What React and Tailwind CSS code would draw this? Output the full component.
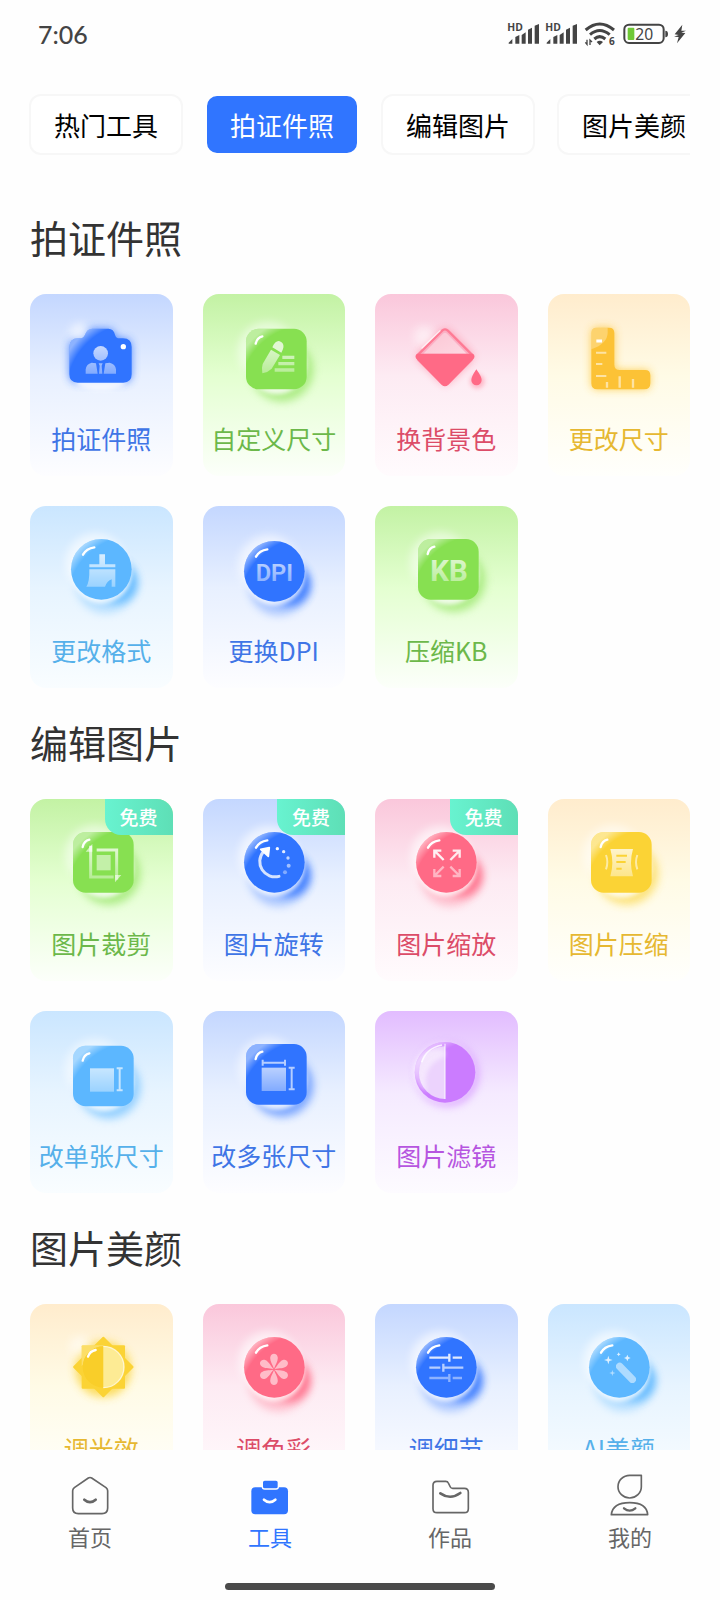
import React, { useState } from "react";
import clsx from "clsx";

const THEMES = {
  blue: { main: "#3074ff", card: "from-[#c4d7ff] via-[#e8f0ff] to-[#fdfdff]", text: "text-[#3f75e6]" },
  green: { main: "#87e051", card: "from-[#c3f2a4] via-[#e4ffd1] to-[#fcfffa]", text: "text-[#6cb84a]" },
  pink: { main: "#ff6a86", card: "from-[#fac7db] via-[#fdebf3] to-[#fffbfd]", text: "text-[#dc4c68]" },
  yellow: { main: "#fbd335", card: "from-[#ffeccd] via-[#fffbe6] to-[#fffffc]", text: "text-[#e6b831]" },
  sky: { main: "#5cb7ff", card: "from-[#cae6ff] via-[#e7f4ff] to-[#f9fdff]", text: "text-[#55b0ea]" },
  purple: { main: "#cb7cff", card: "from-[#e2bcff] via-[#f5eaff] to-[#fdfbff]", text: "text-[#b655e0]" },
};

const TABS = ["热门工具", "拍证件照", "编辑图片", "图片美颜"];

const SECTIONS = [
  {
    title: "拍证件照",
    tools: [
      { name: "拍证件照", theme: "blue", Icon: CameraIcon },
      { name: "自定义尺寸", theme: "green", Icon: EditIcon },
      { name: "换背景色", theme: "pink", Icon: BucketIcon },
      { name: "更改尺寸", theme: "yellow", Icon: RulerIcon },
      { name: "更改格式", theme: "sky", Icon: BrushIcon },
      { name: "更换DPI", theme: "blue", Icon: DpiIcon },
      { name: "压缩KB", theme: "green", Icon: KbIcon },
    ],
  },
  {
    title: "编辑图片",
    tools: [
      { name: "图片裁剪", theme: "green", Icon: CropIcon, free: true },
      { name: "图片旋转", theme: "blue", Icon: RotateIcon, free: true },
      { name: "图片缩放", theme: "pink", Icon: ExpandIcon, free: true },
      { name: "图片压缩", theme: "yellow", Icon: CompressIcon },
      { name: "改单张尺寸", theme: "sky", Icon: SingleSizeIcon },
      { name: "改多张尺寸", theme: "blue", Icon: MultiSizeIcon },
      { name: "图片滤镜", theme: "purple", Icon: FilterIcon },
    ],
  },
  {
    title: "图片美颜",
    tools: [
      { name: "调光效", theme: "yellow", Icon: SunIcon },
      { name: "调色彩", theme: "pink", Icon: FlowerIcon },
      { name: "调细节", theme: "blue", Icon: TuneIcon },
      { name: "AI美颜", theme: "sky", Icon: WandIcon },
    ],
  },
];

const NAV = [
  { name: "首页", href: "#home", Icon: HomeIcon },
  { name: "工具", href: "#tools", Icon: ToolboxIcon },
  { name: "作品", href: "#works", Icon: FolderIcon },
  { name: "我的", href: "#mine", Icon: ProfileIcon },
];

/* Gradients and blurs shared by every tool icon */
function IconDefs() {
  return (
    <svg className="absolute h-0 w-0" aria-hidden="true">
      <defs>
        <linearGradient id="fade" gradientUnits="userSpaceOnUse" x1="0" y1="100" x2="0" y2="215">
          <stop offset="0" stopColor="#fff" stopOpacity="0.8" />
          <stop offset="1" stopColor="#fff" stopOpacity="0.35" />
        </linearGradient>
        <radialGradient id="gloss" gradientUnits="userSpaceOnUse" cx="260" cy="260" r="236">
          <stop offset="0.88" stopColor="#fff" stopOpacity="0" />
          <stop offset="1" stopColor="#fff" stopOpacity="0.45" />
        </radialGradient>
        <linearGradient id="glass" x1="0" y1="0" x2="1" y2="1">
          <stop offset="0" stopColor="#fff" stopOpacity="0.45" />
          <stop offset="1" stopColor="#fff" stopOpacity="0.85" />
        </linearGradient>
        <filter id="blurS" x="-30%" y="-30%" width="160%" height="160%">
          <feGaussianBlur stdDeviation="6" />
        </filter>
        <filter id="blurL" x="-40%" y="-40%" width="180%" height="180%">
          <feGaussianBlur stdDeviation="13" />
        </filter>
      </defs>
    </svg>
  );
}

function IconCanvas({ children }) {
  return (
    <svg viewBox="0 0 312 312" className="h-[104px] w-[104px] overflow-visible" aria-hidden="true">
      {children}
    </svg>
  );
}

function Sphere({ color, y = 0, children }) {
  return (
    <IconCanvas>
      <g transform={`translate(0 ${y})`}>
        <circle cx="140" cy="136" r="90" fill="#fff" opacity="0.6" filter="url(#blurL)" />
        <circle cx="170" cy="196" r="90" fill={color} opacity="0.35" filter="url(#blurL)" />
        <circle cx="204" cy="194" r="62" fill={color} opacity="0.85" filter="url(#blurL)" />
        <circle cx="158" cy="166" r="90" fill="#fff" opacity="0.8" filter="url(#blurS)" />
        <circle cx="157" cy="154" r="91" fill={color} />
        <circle cx="157" cy="154" r="91" fill="url(#gloss)" />
        <path d="M102 110Q112 91 136 88" fill="none" stroke="#fff" strokeWidth="7" strokeLinecap="round" />
      </g>
      {children}
    </IconCanvas>
  );
}

function Tile({ color, y = 0, children }) {
  return (
    <IconCanvas>
      <g transform={`translate(0 ${y})`}>
        <circle cx="138" cy="132" r="90" fill="#fff" opacity="0.5" filter="url(#blurL)" />
        <circle cx="180" cy="188" r="94" fill={color} opacity="0.6" filter="url(#blurL)" />
        <circle cx="164" cy="170" r="90" fill="#fff" opacity="0.8" filter="url(#blurS)" />
        <rect x="72" y="63" width="182" height="182" rx="38" fill={color} />
        <rect x="72" y="63" width="182" height="182" rx="38" fill="url(#gloss)" />
        <path d="M101 108Q105 90 121 86" fill="none" stroke="#fff" strokeWidth="7" strokeLinecap="round" />
      </g>
      {children}
    </IconCanvas>
  );
}

function CameraIcon({ color }) {
  const body =
    "M88 97H92Q104 97 108 86Q114 68 130 68H178Q194 68 198 86Q200 97 212 97H222Q248 97 248 123V205Q248 230 223 230H86Q61 230 61 205V124Q61 97 88 97Z";
  return (
    <IconCanvas>
      <path d={body} fill={color} opacity="0.8" filter="url(#blurL)" />
      <ellipse cx="155" cy="228" rx="76" ry="24" fill="#fff" opacity="0.8" filter="url(#blurS)" />
      <circle cx="92" cy="82" r="30" fill="#fff" opacity="0.6" filter="url(#blurL)" />
      <path d={body} fill={color} />
      <path d={body} fill="url(#gloss)" />
      <circle cx="155" cy="142" r="22" fill="url(#fade)" />
      <path d="M128 170L141 172L146 203H110V190Q112 174 128 170ZM182 170L169 172L164 203H201V190Q199 174 182 170ZM149 172H161L158 179L160 203H150L152 179Z" fill="url(#fade)" />
      <circle cx="223" cy="122" r="8" fill="#fff" />
    </IconCanvas>
  );
}

function EditIcon({ color }) {
  return (
    <Tile color={color} y={5}>
      <path d="M121 202Q118 186 122 174L147 131L174 147L149 188Q138 199 121 202Z" fill="url(#fade)" />
      <path d="M151 124C158 108 167 102 176 107C187 113 187 124 178 140Z" fill="#fff" opacity="0.75" />
      <path d="M181 154H217M169 173H217M158 192H217" stroke="url(#fade)" strokeWidth="10" />
    </Tile>
  );
}

function BucketIcon({ color }) {
  return (
    <IconCanvas>
      <rect x="92" y="90" width="124" height="124" rx="14" transform="rotate(45 154 152)" fill={color} opacity="0.65" filter="url(#blurL)" />
      <circle cx="90" cy="90" r="30" fill="#fff" opacity="0.5" filter="url(#blurL)" />
      <rect x="88" y="88" width="130" height="130" rx="14" transform="rotate(45 153 153)" fill="#fbb0c4" />
      <rect x="91" y="91" width="124" height="124" rx="12" transform="rotate(45 153 153)" fill="none" stroke={color} strokeWidth="7" opacity="0.75" />
      <path d="M147 83Q153 77 159 83L218 143H88Z" fill="url(#glass)" opacity="0.6" />
      <path d="M84 126L138 74" fill="none" stroke="#fff" strokeWidth="4" strokeLinecap="round" opacity="0.7" />
      <path d="M69 143H237Q246 151 237 160L163 236Q153 246 143 236L69 160Q60 151 69 143Z" fill={color} />
      <ellipse cx="250" cy="226" rx="22" ry="22" fill={color} opacity="0.4" filter="url(#blurS)" />
      <path d="M247 190Q263 212 263 222A15 15 0 0 1 232 222Q232 212 247 190Z" fill={color} />
    </IconCanvas>
  );
}

function RulerIcon() {
  const body =
    "M89 65H126Q142 65 142 81V176Q142 192 158 192H234Q250 192 250 208V232Q250 250 232 250H91Q73 250 73 232V81Q73 65 89 65Z";
  return (
    <IconCanvas>
      <path d={body} fill="#fcc436" opacity="0.8" filter="url(#blurL)" />
      <path d={body} fill="#fcc236" />
      <path d="M89 65H122V80Q122 112 73 130V81Q73 65 89 65Z" fill="#fff" opacity="0.28" />
      <path d="M88 105H105" stroke="#fff" strokeWidth="9" />
      <path d="M87 140H118M87 174H106M87 210H118" stroke="#fff" strokeWidth="6" opacity="0.55" />
      <path d="M120 228V245M158 211V245M198 219V245" stroke="#fff" strokeWidth="7" opacity="0.55" />
    </IconCanvas>
  );
}

function BrushIcon({ color }) {
  return (
    <Sphere color={color}>
      <path d="M151 109H168V139H199V148H121V139H151Z" fill="url(#fade)" />
      <path d="M121 154H199V206H188V184Q175 188 168 206H112Q122 192 121 154Z" fill="url(#fade)" />
    </Sphere>
  );
}

function DpiIcon({ color }) {
  return (
    <Sphere color={color} y={6}>
      <text x="157" y="188" textAnchor="middle" fontSize="71" fontWeight="600" fill="url(#fade)" className="font-['Roboto',sans-serif]">DPI</text>
    </Sphere>
  );
}

function KbIcon({ color }) {
  return (
    <Tile color={color}>
      <text x="165" y="188" textAnchor="middle" fontSize="88" fontWeight="700" fill="url(#fade)" className="font-['Roboto',sans-serif]">KB</text>
    </Tile>
  );
}

function CropIcon({ color }) {
  return (
    <Tile color={color}>
      <path d="M125 104V198H194M143 117H203V206" fill="none" stroke="url(#fade)" strokeWidth="9" />
      <path d="M130 98V122H110ZM198 214V192H217Z" fill="#fff" opacity="0.6" />
      <rect x="143" y="132" width="42" height="46" fill="#fff" opacity="0.5" />
    </Tile>
  );
}

function RotateIcon({ color }) {
  return (
    <Sphere color={color}>
      <path d="M124 122A46 46 0 0 0 171 196" fill="none" stroke="#fff" strokeWidth="9" strokeLinecap="round" opacity="0.8" />
      <path d="M116 115L142 110L139 136Z" fill="#fff" stroke="#fff" strokeWidth="5" strokeLinejoin="round" />
      <g fill="#fff">
        <circle cx="166" cy="113" r="5" opacity="0.95" />
        <circle cx="185" cy="122" r="5" opacity="0.85" />
        <circle cx="198" cy="141" r="5" opacity="0.7" />
        <circle cx="200" cy="164" r="6" opacity="0.55" />
        <circle cx="189" cy="184" r="6" opacity="0.4" />
      </g>
    </Sphere>
  );
}

function ExpandIcon({ color }) {
  return (
    <Sphere color={color}>
      <g fill="none" stroke="#fff" strokeWidth="7">
        <path d="M121 140V119H142M121 119L149 147" opacity="0.9" />
        <path d="M197 140V119H176M197 119L169 147" opacity="0.85" />
        <path d="M121 174V195H142M121 195L149 167" opacity="0.5" />
        <path d="M197 174V195H176M197 195L169 167" opacity="0.5" />
      </g>
    </Sphere>
  );
}

function CompressIcon({ color }) {
  return (
    <Tile color={color}>
      <path d="M130 114H198Q186 155 198 196H130Q142 155 130 114Z" fill="url(#fade)" />
      <path d="M148 134H180M148 153H176M148 173H164" stroke={color} strokeWidth="6" />
      <path d="M117 132Q125 153 117 175M211 132Q203 153 211 175" fill="none" stroke="#fff" strokeWidth="6" opacity="0.55" />
    </Tile>
  );
}

function SingleSizeIcon({ color }) {
  return (
    <Tile color={color} y={5}>
      <rect x="123" y="136" width="72" height="70" fill="url(#fade)" />
      <path d="M203 136H221M212 136V202M203 202H221" fill="none" stroke="#fff" strokeWidth="6" opacity="0.65" />
    </Tile>
  );
}

function MultiSizeIcon({ color }) {
  return (
    <Tile color={color}>
      <rect x="119" y="134" width="73" height="70" fill="url(#fade)" />
      <path d="M200 134H218M209 134V199M200 199H218M122 110V128M122 119H189M189 110V128" fill="none" stroke="#fff" strokeWidth="6" opacity="0.65" />
    </Tile>
  );
}

function FilterIcon({ color }) {
  return (
    <IconCanvas>
      <circle cx="160" cy="156" r="94" fill={color} opacity="0.6" filter="url(#blurL)" />
      <circle cx="150" cy="148" r="94" fill="#fff" opacity="0.4" filter="url(#blurS)" />
      <circle cx="153" cy="148" r="91" fill={color} />
      <circle cx="153" cy="148" r="91" fill="url(#gloss)" />
      <path d="M153 70A78 79 0 0 0 153 228Z" fill="#ecd3fd" />
      <path d="M153 84A66 66 0 0 0 100 208Q78 130 153 100Z" fill="#fff" opacity="0.45" filter="url(#blurS)" />
      <path d="M83 118Q96 76 144 66" fill="none" stroke="#fff" strokeWidth="5" opacity="0.8" />
      <path d="M153 62V228" stroke="#fff" strokeWidth="4" opacity="0.7" />
    </IconCanvas>
  );
}

function SunIcon({ color }) {
  return (
    <IconCanvas>
      <circle cx="163" cy="160" r="84" fill={color} opacity="0.75" filter="url(#blurL)" />
      <circle cx="92" cy="90" r="30" fill="#fff" opacity="0.5" filter="url(#blurL)" />
      <g fill={color}>
        <rect x="98" y="88" width="130" height="130" rx="3" />
        <rect x="98" y="88" width="130" height="130" rx="3" transform="rotate(45 163 153)" />
      </g>
      <path d="M98 88H163V91A62 62 0 0 0 102 146L98 150Z" fill="#fff" opacity="0.25" />
      <path d="M163 91A62 62 0 0 0 163 215Z" fill="#f9ce29" />
      <path d="M163 91A62 62 0 0 1 163 215Z" fill="#fdeb94" />
      <path d="M163 91A62 62 0 0 1 163 215" fill="none" stroke="#fff" strokeWidth="4" opacity="0.7" />
      <path d="M117 122Q122 106 140 102" fill="none" stroke="#fff" strokeWidth="7" strokeLinecap="round" />
    </IconCanvas>
  );
}

function FlowerIcon({ color }) {
  return (
    <Sphere color={color}>
      <g transform="translate(156 160)" fill="#fff" opacity="0.55">
        {[0, 60, 120, 180, 240, 300].map((deg) => (
          <path key={deg} d="M0-2C-5-16-13-26-11-37C-8-50 8-50 11-37C13-26 5-16 0-2Z" transform={`rotate(${deg})`} />
        ))}
      </g>
    </Sphere>
  );
}

function TuneIcon({ color }) {
  return (
    <Sphere color={color}>
      <g stroke="#fff" strokeWidth="7">
        <path d="M106 125H166M166 113V137M176 125H204" opacity="0.85" fill="none" />
        <path d="M106 155H139M148 143V167M148 155H208" opacity="0.65" fill="none" />
        <path d="M106 186H166M166 174V198M176 186H204" opacity="0.45" fill="none" />
      </g>
    </Sphere>
  );
}

function WandIcon({ color }) {
  return (
    <Sphere color={color}>
      <path d="M158 151L196 190" stroke="#fff" strokeWidth="22" strokeLinecap="round" opacity="0.5" />
      <g fill="#fff" opacity="0.8">
        <path d="M124 119L127 129L137 132L127 135L124 145L121 135L111 132L121 129Z" />
        <path d="M181 116L184 123L191 126L184 129L181 136L178 129L171 126L178 123Z" />
        <path d="M155 109L157 113L161 115L157 117L155 121L153 117L149 115L153 113Z" />
        <path d="M136 162L138 169L145 171L138 173L136 180L134 173L127 171L134 169Z" opacity="0.7" />
      </g>
    </Sphere>
  );
}

function NavCanvas({ children }) {
  return (
    <svg viewBox="0 0 132 132" className="h-11 w-11" fill="none" stroke="currentColor" strokeWidth="5" strokeLinejoin="round" strokeLinecap="round" aria-hidden="true">
      {children}
    </svg>
  );
}

function HomeIcon() {
  return (
    <NavCanvas>
      <path d="M61 12Q66 9 71 12L114 41Q119 45 119 50V102Q119 119 102 119H31Q14 119 14 102V50Q14 45 19 41Z" />
      <path d="M49 77Q66 92 83 77" strokeWidth="8" />
    </NavCanvas>
  );
}

function ToolboxIcon() {
  return (
    <NavCanvas>
      <rect x="10" y="40" width="110" height="81" rx="12" fill="currentColor" stroke="none" />
      <rect x="43" y="18" width="48" height="27" rx="7" fill="currentColor" stroke="#fff" strokeWidth="4" />
      <path d="M48 77Q65 92 82 77" stroke="#fff" strokeWidth="8" />
    </NavCanvas>
  );
}

function FolderIcon() {
  return (
    <NavCanvas>
      <path d="M27 22H53Q59 22 61 27L67 39Q69 43 74 43H109Q121 43 121 55V104Q121 116 109 116H27Q15 116 15 104V34Q15 22 27 22Z" />
      <path d="M37 58Q67 79 97 57" strokeWidth="8" />
    </NavCanvas>
  );
}

function ProfileIcon() {
  return (
    <NavCanvas>
      <path d="M65 4H100V38A35 34 0 1 1 65 4Z" />
      <path d="M10 122Q14 86 65 86Q116 86 119 122Z" />
      <path d="M48 103Q65 117 82 103" strokeWidth="7" />
    </NavCanvas>
  );
}

function Signal() {
  return (
    <svg viewBox="0 0 96 66" className="h-[22px] w-8 overflow-visible" fill="#444" aria-hidden="true">
      <text x="-2" y="25" fontSize="31" fontWeight="700" className="font-['Open_Sans',sans-serif]">HD</text>
      <path d="M2 59L13 48V62H2ZM22 42L34 36V62H22ZM41 36L53 28V62H41ZM60 20L72 14V62H60ZM80 8L93 3V62H80Z" />
    </svg>
  );
}

function StatusBar() {
  return (
    <header className="flex h-[68px] shrink-0 items-center justify-between pr-[34px] pl-[38px] text-[#444]">
      <time className="font-['Lato',sans-serif] text-[25px] leading-8 font-medium">7:06</time>
      <div className="flex items-center gap-[6px]">
        <Signal />
        <Signal />
        <svg viewBox="0 0 96 72" className="h-6 w-8 overflow-visible" fill="none" stroke="#444" aria-hidden="true">
          <path d="M5 24Q47-12 90 24M18 38Q47 13 77 38M31 51Q47 37 64 51" strokeWidth="9" />
          <path d="M38 60Q47 53 57 60L47 70Z" fill="#444" stroke="none" />
          <path d="M9 53V67L4 61M18 69V54L24 60" strokeWidth="4" />
          <text x="75" y="70" fontSize="30" fontWeight="700" fill="#444" stroke="none" className="font-['Open_Sans',sans-serif]">6</text>
        </svg>
        <svg viewBox="0 0 138 66" className="h-[22px] w-[46px] overflow-visible" aria-hidden="true">
          <rect x="7" y="5" width="118" height="55" rx="14" fill="none" stroke="#444" strokeWidth="6" />
          <rect x="17" y="14" width="20" height="37" rx="3" fill="#6fc936" />
          <path d="M130 23Q138 23 138 33Q138 43 130 43Z" fill="#444" />
          <text x="40" y="50" fontSize="47" fill="#444" className="font-['Noto_Sans',sans-serif]">20</text>
        </svg>
        <svg viewBox="0 0 36 60" className="h-5 w-3" fill="#444" aria-hidden="true">
          <path d="M25 2L2 31L14 33L0 38L14 39L9 58L34 27L22 26L36 20L22 20Z" />
        </svg>
      </div>
    </header>
  );
}

function ToolCard({ tool }) {
  const theme = THEMES[tool.theme];
  return (
    <button
      type="button"
      className={clsx(
        "relative flex flex-col items-center overflow-hidden rounded-2xl bg-linear-to-b via-45% pt-3 pb-5",
        theme.card
      )}
    >
      <tool.Icon color={theme.main} />
      <span className={clsx("mt-[10px] text-[25px] leading-9 whitespace-nowrap", theme.text)}>{tool.name}</span>
      {tool.free && (
        <span className="absolute top-0 right-0 h-9 w-[68px] rounded-bl-2xl bg-linear-to-r from-[#68f3d0] to-[#5edfb6] text-center text-[19px] leading-9 font-medium text-white">
          免费
        </span>
      )}
    </button>
  );
}

export default function App() {
  const [tab, setTab] = useState("拍证件照");
  const [page, setPage] = useState("工具");

  return (
    <div className="flex h-screen flex-col bg-[#fefefe] font-['Noto_Sans_CJK_SC',sans-serif]">
      <IconDefs />
      <StatusBar />

      {/* Category tabs */}
      <nav className="mt-[26px] mr-[30px] mb-7 ml-[29px] flex shrink-0 gap-[22px] overflow-x-auto [scrollbar-width:none]">
        {TABS.map((name) => (
          <button
            key={name}
            type="button"
            onClick={() => setTab(name)}
            className={clsx(
              "h-[61px] shrink-0 rounded-xl border-2 px-[23px] text-[26px] leading-9",
              tab === name ? "border-[#fefefe] bg-[#3075ff] text-white" : "border-[#f7f7f7] bg-white text-black"
            )}
          >
            {name}
          </button>
        ))}
      </nav>

      {/* Tool sections */}
      <main className="min-h-0 flex-1 overflow-y-auto px-[30px] [scrollbar-width:none]">
        {SECTIONS.map((section) => (
          <section key={section.title}>
            <h2 className="pt-[27px] pb-[30px] text-[38px] leading-[54px] text-[#333]">{section.title}</h2>
            <div className="grid grid-cols-4 gap-[30px]">
              {section.tools.map((tool) => (
                <ToolCard key={tool.name} tool={tool} />
              ))}
            </div>
          </section>
        ))}
      </main>

      {/* Bottom navigation */}
      <footer className="shrink-0 bg-[#fefefe] pt-6 pb-[10px]">
        <nav className="flex">
          {NAV.map((item) => (
            <a
              key={item.name}
              href={item.href}
              onClick={() => setPage(item.name)}
              className={clsx(
                "flex flex-1 flex-col items-center gap-1 text-[22px] leading-7",
                page === item.name ? "text-[#3075ff]" : "text-[#666]"
              )}
            >
              <item.Icon />
              {item.name}
            </a>
          ))}
        </nav>
        <div className="mx-auto mt-[33px] h-[7px] w-[270px] rounded-full bg-[#4a4a4a]" />
      </footer>
    </div>
  );
}
